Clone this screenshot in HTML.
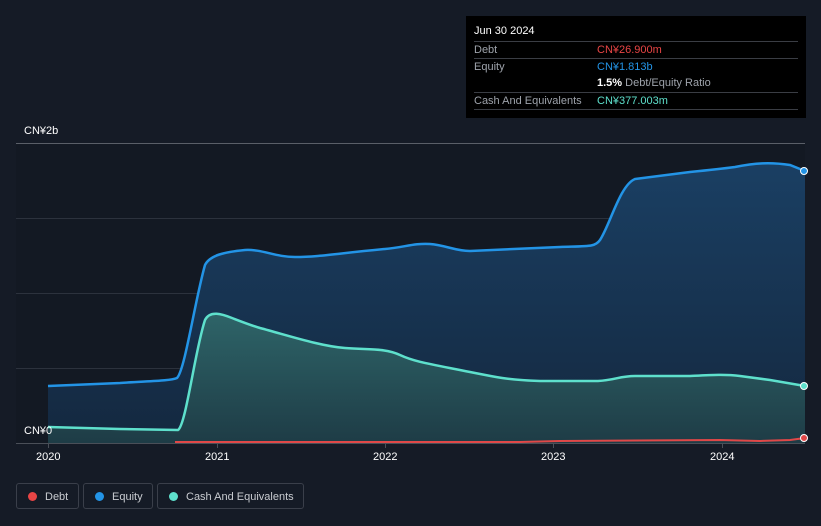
<!DOCTYPE html>
<html><head><meta charset="utf-8"><style>
body{margin:0;width:821px;height:526px;background:#151b26;font-family:"Liberation Sans","Noto Sans CJK SC",sans-serif;overflow:hidden;position:relative}
.tt{position:absolute;left:466px;top:16px;width:340px;height:102px;background:#000;color:#fff;font-size:11px}
.tt .r{position:absolute;left:8px;right:8px;border-top:1px solid #3a3d44;height:16px;line-height:16px;color:#9ea3ab}
.tt .v{position:absolute;left:123px}
.ax{position:absolute;color:#fff;font-size:11px}
.lg{position:absolute;top:483px;height:26px;border:1px solid #3a3f4a;border-radius:3px;color:#c9ccd1;font-size:11px;line-height:26px;box-sizing:border-box}
.lg i{position:absolute;left:11px;top:8px;width:9px;height:9px;border-radius:50%}
</style></head><body>
<svg width="821" height="526" style="position:absolute;left:0;top:0">
<defs>
<linearGradient id="ge" x1="0" y1="0" x2="0" y2="1"><stop offset="0" stop-color="#1a3f63"/><stop offset="1" stop-color="#14283f"/></linearGradient>
<linearGradient id="gc" x1="0" y1="0" x2="0" y2="1"><stop offset="0" stop-color="#2e6468"/><stop offset="1" stop-color="#1e3c46"/></linearGradient>
</defs>
<rect x="16" y="143" width="789" height="300" fill="#131923"/>
<g stroke="#2c323d" stroke-width="1">
<line x1="16" y1="143.5" x2="805" y2="143.5" stroke="#5a5f68"/>
<line x1="16" y1="218.5" x2="805" y2="218.5"/>
<line x1="16" y1="293.5" x2="805" y2="293.5"/>
<line x1="16" y1="368.5" x2="805" y2="368.5"/>
</g>
<path d="M48,386 L120,383 C150,381 170,381 177,378 C185,370 195,300 205,265 C210,255 225,252 245,250 C262,249 275,257 295,257 C320,257 340,253 385,249 C405,247 415,243 430,244 C445,245 455,251 470,251 L560,247 C590,246 595,247 600,240 C610,225 620,185 635,179 L690,172 C710,170 720,169 735,167 C755,163 770,162 790,165 L805,171 L805,443 L48,443Z" fill="url(#ge)"/>
<path d="M48,427 L120,429 L178,430 C186,425 195,350 205,320 C210,310 222,314 232,318 C245,323 250,325 260,328 C290,336 320,346 345,348 C370,350 385,348 400,355 C415,362 430,364 470,372 C500,378 510,380 540,381 L598,381 C615,380 620,376 635,376 L690,376 C710,375 725,374 740,376 L770,380 L805,386 L805,443 L48,443Z" fill="url(#gc)"/>
<path d="M48,386 L120,383 C150,381 170,381 177,378 C185,370 195,300 205,265 C210,255 225,252 245,250 C262,249 275,257 295,257 C320,257 340,253 385,249 C405,247 415,243 430,244 C445,245 455,251 470,251 L560,247 C590,246 595,247 600,240 C610,225 620,185 635,179 L690,172 C710,170 720,169 735,167 C755,163 770,162 790,165 L805,171" fill="none" stroke="#2394e6" stroke-width="2.5"/>
<path d="M48,427 L120,429 L178,430 C186,425 195,350 205,320 C210,310 222,314 232,318 C245,323 250,325 260,328 C290,336 320,346 345,348 C370,350 385,348 400,355 C415,362 430,364 470,372 C500,378 510,380 540,381 L598,381 C615,380 620,376 635,376 L690,376 C710,375 725,374 740,376 L770,380 L805,386" fill="none" stroke="#5ee0cc" stroke-width="2.5"/>
<path d="M175,442 L520,442 L560,441 L720,440 L760,441 L790,440 L805,438" fill="none" stroke="#e04848" stroke-width="2"/>
<line x1="16" y1="443.5" x2="805" y2="443.5" stroke="#4a4f58"/>
<g stroke="#4a4f58"><line x1="48.5" y1="443" x2="48.5" y2="448"/><line x1="217.5" y1="443" x2="217.5" y2="448"/><line x1="385.5" y1="443" x2="385.5" y2="448"/><line x1="553.5" y1="443" x2="553.5" y2="448"/><line x1="722.5" y1="443" x2="722.5" y2="448"/></g>
<circle cx="804" cy="171" r="3.5" fill="#2394e6" stroke="#fff" stroke-width="1"/>
<circle cx="804" cy="386" r="3.5" fill="#5ee0cc" stroke="#fff" stroke-width="1"/>
<circle cx="804" cy="438" r="3.5" fill="#e04848" stroke="#fff" stroke-width="1"/>
</svg>
<div class="ax" style="left:24px;top:125px">CN¥2b</div>
<div class="ax" style="left:24px;top:425px">CN¥0</div>
<div class="ax" style="left:36px;top:451px">2020</div>
<div class="ax" style="left:205px;top:451px">2021</div>
<div class="ax" style="left:373px;top:451px">2022</div>
<div class="ax" style="left:541px;top:451px">2023</div>
<div class="ax" style="left:710px;top:451px">2024</div>
<div class="tt">
<div style="position:absolute;left:8px;top:9px">Jun 30 2024</div>
<div class="r" style="top:25px">Debt<span class="v" style="color:#e84545">CN¥26.900m</span></div>
<div class="r" style="top:42px">Equity<span class="v" style="color:#2394e6">CN¥1.813b</span></div>
<div class="r" style="top:59px;border-top:none"><span class="v"><b style="color:#fff;font-weight:bold">1.5%</b> Debt/Equity Ratio</span></div>
<div class="r" style="top:76px">Cash And Equivalents<span class="v" style="color:#5ee0cc">CN¥377.003m</span></div>
<div class="r" style="top:93px;height:0"></div>
</div>
<div class="lg" style="left:16px;width:63px"><i style="background:#e84545"></i><span style="position:absolute;left:28px">Debt</span></div>
<div class="lg" style="left:83px;width:70px"><i style="background:#2394e6"></i><span style="position:absolute;left:28px">Equity</span></div>
<div class="lg" style="left:157px;width:147px"><i style="background:#5ee0cc"></i><span style="position:absolute;left:28px">Cash And Equivalents</span></div>
</body></html>
